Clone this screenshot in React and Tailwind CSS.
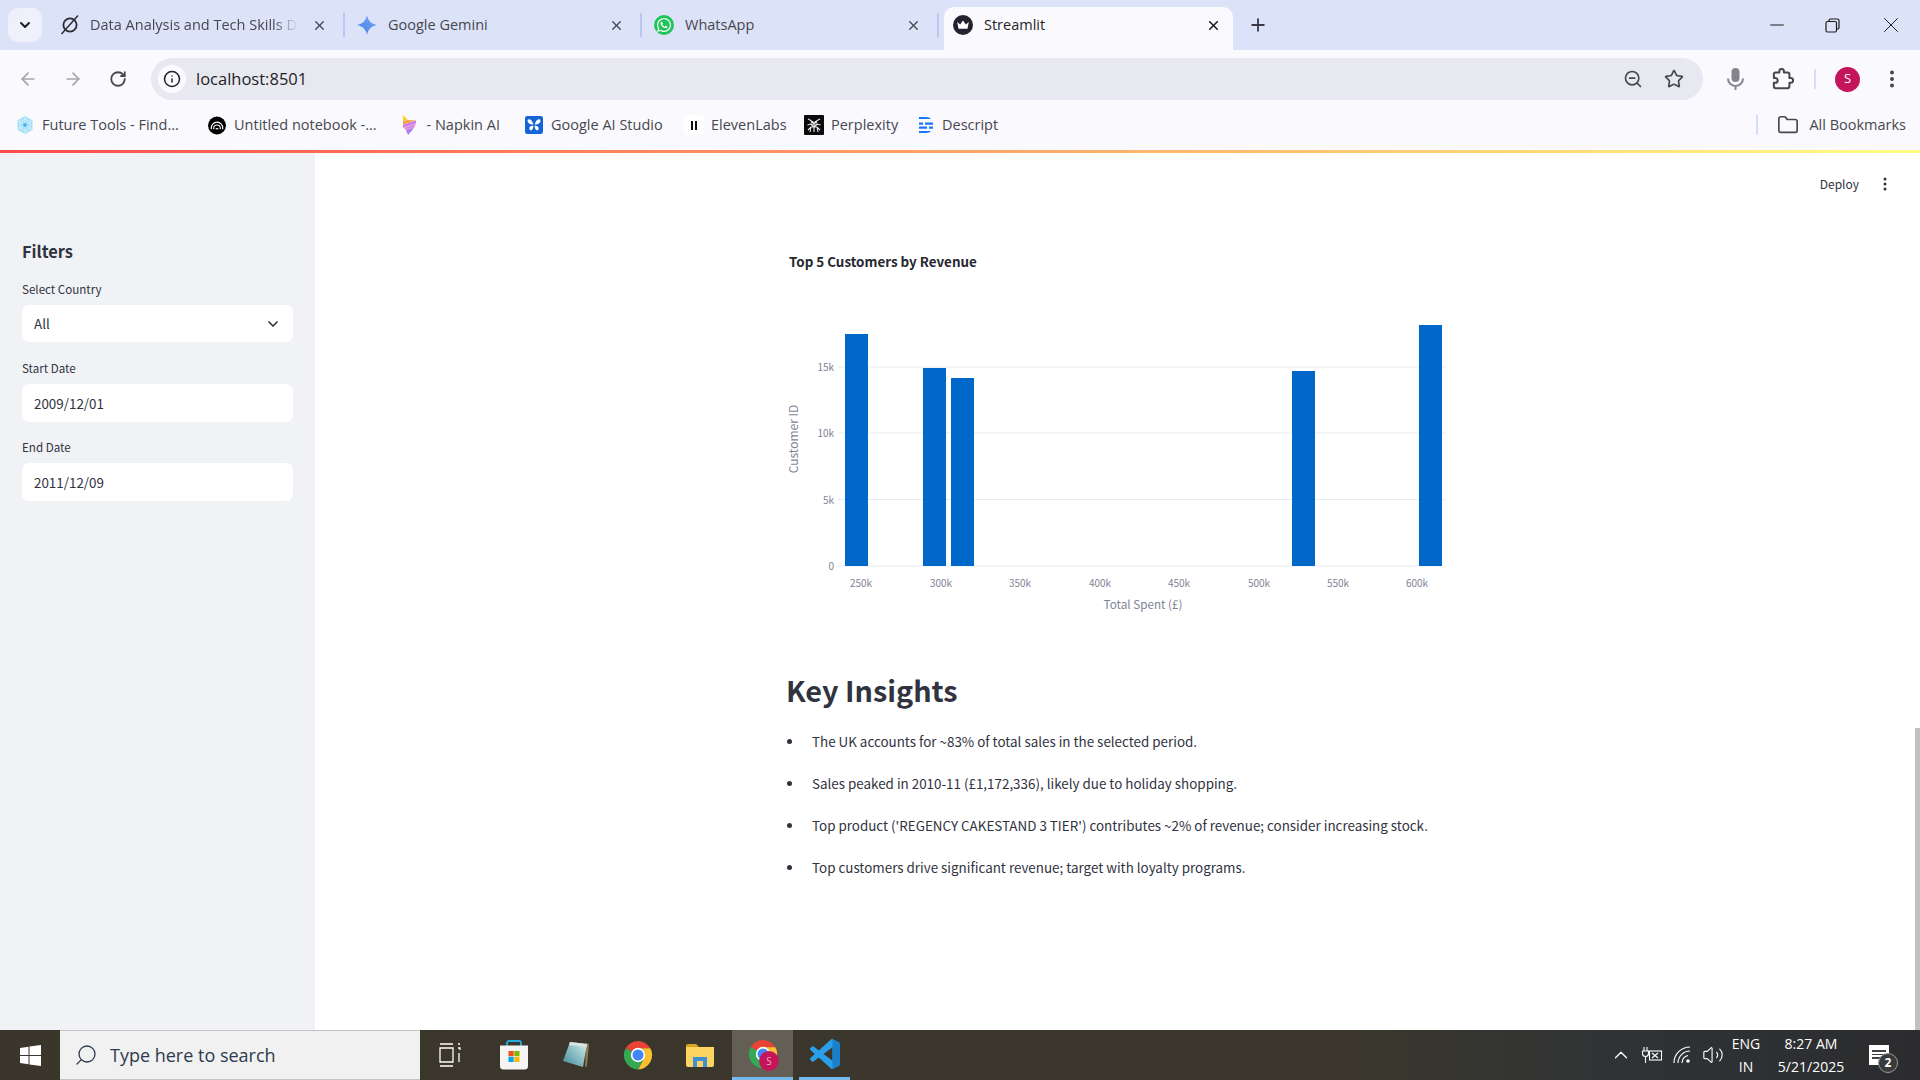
import React from 'react';
import { FaWhatsapp } from 'react-icons/fa';
import {
  ArrowLeft,
  ArrowRight,
  RotateCw,
  Info,
  ZoomOut,
  Star,
  Folder,
  ChevronDown,
  X,
  Plus,
  Minus,
  Search,
  ChevronUp,
  Volume2,
} from 'lucide-react';

const BARS = [
  { x: 845, top: 334 },
  { x: 923, top: 368 },
  { x: 951, top: 378 },
  { x: 1292, top: 371 },
  { x: 1419, top: 325 },
];
const X_TICKS = [
  ['250k', 861],
  ['300k', 941],
  ['350k', 1020],
  ['400k', 1100],
  ['450k', 1179],
  ['500k', 1259],
  ['550k', 1338],
  ['600k', 1417],
];
const Y_TICKS = [
  ['15k', 367],
  ['10k', 433],
  ['5k', 499.5],
  ['0', 566],
];
const INSIGHTS = [
  'The UK accounts for ~83% of total sales in the selected period.',
  'Sales peaked in 2010-11 (£1,172,336), likely due to holiday shopping.',
  "Top product ('REGENCY CAKESTAND 3 TIER') contributes ~2% of revenue; consider increasing stock.",
  'Top customers drive significant revenue; target with loyalty programs.',
];

const ChromeLogo = ({ size = 30 }) => (
  <svg width={size} height={size} viewBox="0 0 48 48">
    <path d="M4.200 13A23 23 0 0 1 43.800 13H24A11 11 0 0 0 14.500 18.500z" fill="#ea4335" />
    <path d="M43.800 13A23 23 0 0 1 24 47L33.500 29.500A11 11 0 0 0 24 13z" fill="#fbc02d" />
    <path d="M24 47A23 23 0 0 1 4.200 13L14.500 18.500 14.500 29.500 33.500 29.500z" fill="#34a853" />
    <circle cx="24" cy="24" r="11.500" fill="#fff" />
    <circle cx="24" cy="24" r="8.800" fill="#4285f4" />
  </svg>
);

const FavGrok = () => (
  <svg width="20" height="20" viewBox="0 0 20 20" fill="none" stroke="#2b2b30" strokeWidth="1.800">
    <circle cx="10" cy="10" r="6.600" />
    <path d="M1.500 19 18 .5" strokeWidth="1.400" />
  </svg>
);

const FavGemini = () => (
  <svg width="20" height="20" viewBox="0 0 20 20">
    <defs>
      <linearGradient id="gem" x1="0" y1="1" x2="1" y2="0">
        <stop offset="0" stopColor="#3f83e8" />
        <stop offset="1" stopColor="#7aa5f0" />
      </linearGradient>
    </defs>
    <path d="M10 0c.8 5.400 4.600 9.200 10 10-5.400.8-9.200 4.600-10 10-.8-5.400-4.600-9.200-10-10C5.400 9.200 9.200 5.400 10 0z" fill="url(#gem)" />
  </svg>
);

const FavWhatsApp = () => (
  <span className="flex h-5 w-5 items-center justify-center rounded-full bg-[#1fc45a] text-white">
    <FaWhatsapp size={16} />
  </span>
);

const FavStreamlit = () => (
  <svg width="20" height="20" viewBox="0 0 20 20">
    <circle cx="10" cy="10" r="10" fill="#23232f" />
    <path d="M4.200 7 7.200 9.400 10 5.400l2.800 4L15.800 7 14.500 13.800H5.500z" fill="#fff" />
  </svg>
);

const Tab = ({ icon, title, width, active, first }) => (
  <div
    className={
      active
        ? 'flex h-[43px] items-center self-end rounded-t-[10px] bg-[#faf9fe] pb-[7px] pl-[9px] text-[#1f1f24]'
        : 'flex h-[24px] items-center border-r-2 border-[#b9c8f3] pl-[12px] text-[#474750]'
    }
    style={{ width }}
  >
    <span className="flex w-[20px] shrink-0 justify-center">{icon}</span>
    <span
      className={
        first
          ? 'ml-[10px] w-[208px] overflow-hidden whitespace-nowrap text-[14.5px] [mask-image:linear-gradient(90deg,#000_88%,transparent)]'
          : 'ml-[11px] w-[208px] overflow-hidden whitespace-nowrap text-[14.5px]'
      }
    >
      {title}
    </span>
    <X size={15} strokeWidth={active ? 2.600 : 2.200} className={first || active ? 'ml-[14px]' : 'ml-[13px]'} />
  </div>
);

const TabStrip = () => (
  <div className="flex h-[50px] shrink-0 items-center bg-[#dce2f8]">
    <div className="ml-[8px] flex h-[34px] w-[34px] items-center justify-center rounded-[10px] bg-[#eef1fc] text-[#1f1f24]">
      <ChevronDown size={16} strokeWidth={3} />
    </div>
    <div className="ml-[6px] flex h-full items-center">
      <Tab icon={<FavGrok />} title="Data Analysis and Tech Skills Demo" width={297} first />
      <Tab icon={<FavGemini />} title="Google Gemini" width={297} />
      <Tab icon={<FavWhatsApp />} title="WhatsApp" width={297} />
      <div className="w-[5px]" />
      <Tab icon={<FavStreamlit />} title="Streamlit" width={289} active />
    </div>
    <Plus size={20} strokeWidth={2.200} className="ml-[15px] text-[#3a3a42]" />
    <div className="ml-auto flex items-center text-[#1c1c1c]">
      <Minus size={22} strokeWidth={1.100} className="mr-[37px]" />
      <svg width="15" height="15" viewBox="0 0 15 15" fill="none" stroke="#1c1c1c" strokeWidth="1.200" className="mr-[38px]">
        <rect x="1" y="3.500" width="10.500" height="10.500" rx="1.500" />
        <path d="M4 3.500V2.500A1.500 1.500 0 0 1 5.500 1H12.500A1.500 1.500 0 0 1 14 2.500V9.500A1.500 1.500 0 0 1 12.500 11H11.500" />
      </svg>
      <X size={26} strokeWidth={0.900} className="mr-[16px]" />
    </div>
  </div>
);

const AddressRow = () => (
  <div className="flex h-[50px] shrink-0 items-center pl-[18px] pt-[8px]">
    <ArrowLeft size={20} className="text-[#a4a4ab]" />
    <ArrowRight size={20} className="ml-[25px] text-[#a4a4ab]" />
    <RotateCw size={18} strokeWidth={2.400} className="ml-[26px] text-[#47474f]" />
    <div className="ml-[24px] flex h-[42px] w-[1552px] items-center rounded-full bg-[#e8e8f0] pl-[7px]">
      <span className="flex h-[28px] w-[28px] items-center justify-center rounded-full bg-[#faf9fe] text-[#1f1f24]">
        <Info size={18} strokeWidth={2} />
      </span>
      <span className="ml-[10px] text-[16.500px] leading-none text-[#1f1f24]">localhost:8501</span>
      <ZoomOut size={20} strokeWidth={2} className="ml-auto text-[#47474f]" />
      <Star size={20} strokeWidth={2} className="ml-[21px] mr-[19px] text-[#47474f]" />
    </div>
    {/* mic */}
    <svg width="21" height="24" viewBox="0 0 21 24" fill="none" className="ml-[22px]">
      <rect x="6.500" y="1" width="8" height="14" rx="4" fill="#84848c" />
      <path d="M3 11.500a7.500 7.500 0 0 0 15 0M10.500 19v4" stroke="#84848c" strokeWidth="2" />
    </svg>
    {/* extensions */}
    <svg width="22" height="22" viewBox="0 0 24 24" fill="none" stroke="#47474f" strokeWidth="2.200" strokeLinejoin="round" className="ml-[26px]">
      <path d="M20.500 11H19V7c0-1.100-.9-2-2-2h-4V3.500a2.500 2.500 0 0 0-5 0V5H4c-1.100 0-1.990.9-1.990 2v3.800H3.500c1.490 0 2.700 1.210 2.700 2.700s-1.210 2.700-2.700 2.700H2V20c0 1.100.9 2 2 2h13c1.100 0 2-.9 2-2v-4h1.500a2.500 2.500 0 0 0 0-5z" />
    </svg>
    <span className="ml-[20px] h-[20px] w-[2px] bg-[#d6def8]" />
    <span className="ml-[19px] flex h-[25px] w-[25px] items-center justify-center rounded-full bg-[#c4155a] text-[13px] text-white">
      S
    </span>
    <svg width="6" height="18" viewBox="0 0 6 18" fill="#47474f" className="ml-[29px]">
      <circle cx="3" cy="2.500" r="2" />
      <circle cx="3" cy="9" r="2" />
      <circle cx="3" cy="15.500" r="2" />
    </svg>
  </div>
);

const Bookmark = ({ icon, label, labelWidth, gap }) => (
  <div className="flex items-center" style={{ marginRight: gap }}>
    <span className="flex w-[18px] shrink-0 justify-center">{icon}</span>
    <span className="ml-[8px] whitespace-nowrap text-[14.500px] text-[#47474f]" style={{ width: labelWidth }}>
      {label}
    </span>
  </div>
);

const BookmarksRow = () => (
  <div className="flex h-[50px] shrink-0 items-center pl-[16px]">
    <Bookmark
      gap={31}
      labelWidth={135}
      label="Future Tools - Find..."
      icon={
        <svg width="18" height="20" viewBox="0 0 18 20" fill="none">
          <path d="M9 1l7.500 4.300v9.400L9 19l-7.500-4.300V5.300z" fill="#a6e0f8" />
          <path d="M9 4l5 2.900v6.200L9 16l-5-2.900V6.900zM9 1v18M1.500 5.300l15 9.400M16.500 5.300l-15 9.400" stroke="#d8f3fd" strokeWidth="0.800" />
          <circle cx="9" cy="10" r="2" fill="#4cb8ee" />
        </svg>
      }
    />
    <Bookmark
      gap={22.500}
      labelWidth={144}
      label="Untitled notebook -..."
      icon={
        <svg width="19" height="19" viewBox="0 0 19 19" fill="none">
          <circle cx="9.500" cy="9.500" r="9.500" fill="#000" />
          <path d="M3.500 13.500V12a6 6 0 0 1 12 0v1.500M6 13.500V12.500a3.500 3.500 0 0 1 7 0v1M8.200 13.500a1.400 1.400 0 0 1 2.600 0" stroke="#fff" strokeWidth="1.200" />
        </svg>
      }
    />
    <Bookmark
      gap={23.500}
      labelWidth={75}
      label="- Napkin AI"
      icon={
        <svg width="16" height="20" viewBox="0 0 16 20">
          <path d="M1 0l5 5-5 1z" fill="#f9d423" />
          <path d="M1 6l5-1 8 .5L1 10z" fill="#f7a24b" />
          <path d="M1 10l13-4.500v2.500L1 13z" fill="#c77df0" />
          <path d="M2 13l12-5-2 5-8 2z" fill="#e58ad6" />
          <path d="M4 15l8-2-6 7z" fill="#a47cf3" />
        </svg>
      }
    />
    <Bookmark
      gap={21}
      labelWidth={113}
      label="Google AI Studio"
      icon={
        <svg width="20" height="20" viewBox="0 0 20 20" fill="#fff">
          <rect width="20" height="20" rx="2.500" fill="#1565d8" />
          <path d="M9.300 9.500C8.200 5.500 6.300 3.500 4.500 3.500 3 3.500 2.500 5 3 6.500 3.700 8.500 6 9.800 9.300 9.500z" />
          <path d="M10.700 9.500C11.800 5.500 13.700 3.500 15.500 3.500 17 3.500 17.500 5 17 6.500 16.300 8.500 14 9.800 10.700 9.500z" />
          <path d="M9.300 10.800C6.500 10.500 4.700 12 4.800 14 4.900 15.800 6.500 16.500 7.600 15.500 8.800 14.500 9.300 12.800 9.300 10.800z" />
          <path d="M10.700 10.800C13.500 10.500 15.300 12 15.200 14 15.100 15.800 13.500 16.500 12.400 15.500 11.200 14.500 10.700 12.800 10.700 10.800z" />
        </svg>
      }
    />
    <Bookmark
      gap={21}
      labelWidth={73}
      label="ElevenLabs"
      icon={
        <span className="flex h-[20px] w-[20px] shrink-0 items-center justify-center gap-[2px] rounded-[4px] bg-white">
          <span className="h-[9px] w-[2px] bg-[#111]" />
          <span className="h-[9px] w-[2px] bg-[#111]" />
        </span>
      }
    />
    <Bookmark
      gap={21}
      labelWidth={64}
      label="Perplexity"
      icon={
        <svg width="20" height="20" viewBox="0 0 20 20" fill="none" className="shrink-0">
          <rect width="20" height="20" rx="1" fill="#0b0b0b" />
          <path d="M6 5l4 3 4-3M4 4l2 1M16 4l-2 1M10 8v9M6 9h8M3.500 10l3-1 3.500 3 3.500-3 3 1M4 15l3-3h6l3 3M7 12l-1 5M13 12l1 5" stroke="#e8e8e8" strokeWidth="1.100" />
          <circle cx="8" cy="7" r="1" fill="#fff" />
          <circle cx="12" cy="7" r="1" fill="#fff" />
        </svg>
      }
    />
    <Bookmark
      gap={0}
      labelWidth={56}
      label="Descript"
      icon={
        <svg width="15" height="18" viewBox="0 0 15 18" fill="#1677ff">
          <path d="M1 1h7c2.500 0 4 .7 5 2H1z" />
          <path d="M1 6.500h4v2.200H1zM7 6.500h8v2.200H7z" />
          <path d="M1 10.500h8v2.200H1zM11 10.500h4v2.200h-4z" />
          <path d="M1 15h12c-1 1.300-2.500 2-5 2H1z" />
        </svg>
      }
    />
    <span className="ml-auto h-[20px] w-[2px] bg-[#d6def8]" />
    <Folder size={22} strokeWidth={1.800} className="ml-[19px] text-[#47474f]" />
    <span className="ml-[10px] mr-[14px] text-[14.500px] text-[#47474f]">All Bookmarks</span>
  </div>
);

const Field = ({ label, value, caret, boxClass, className }) => (
  <div className={className}>
    <div className="h-[16px] text-[11.600px] leading-[16px] text-[#31333f]">{label}</div>
    <div className={'mt-[8px] flex items-center justify-between rounded-[7px] bg-white pl-[12px] pr-[12px] text-[13.400px] text-[#31333f] ' + boxClass}>
      <span>{value}</span>
      {caret && <ChevronDown size={16} strokeWidth={2.500} />}
    </div>
  </div>
);

const Sidebar = () => (
  <aside className="w-[315px] shrink-0 bg-[#f0f2f6] px-[22px] pt-[86px]">
    <h2 className="h-[24px] text-[16.400px] font-bold leading-[24px] text-[#31333f]">Filters</h2>
    <Field className="mt-[18px]" label="Select Country" value="All" caret boxClass="h-[37px]" />
    <Field className="mt-[18px]" label="Start Date" value="2009/12/01" boxClass="h-[38px]" />
    <Field className="mt-[17px]" label="End Date" value="2011/12/09" boxClass="h-[38px]" />
  </aside>
);

// plot drawn in page coordinates, shifted by the viewBox origin
const Chart = () => (
  <svg width="680" height="340" viewBox="776 280 680 340" className="-ml-[10px] block">
    {Y_TICKS.map(([label, y]) => (
      <g key={label}>
        <line x1="838" x2="1445" y1={y} y2={y} stroke="#e6eaf1" strokeWidth="1" />
        <text x="834" y={y + 4} textAnchor="end" fontSize="10" fill="#808495">
          {label}
        </text>
      </g>
    ))}
    {BARS.map((bar) => (
      <rect key={bar.x} x={bar.x} y={bar.top} width="23" height={566 - bar.top} fill="#0068c9" />
    ))}
    {X_TICKS.map(([label, x]) => (
      <text key={label} x={x} y="587" textAnchor="middle" fontSize="10" fill="#808495">
        {label}
      </text>
    ))}
    <text x="1143" y="609" textAnchor="middle" fontSize="11.700" fill="#808495">
      Total Spent (£)
    </text>
    <text x="798" y="439" textAnchor="middle" fontSize="12" fill="#808495" transform="rotate(-90 798 439)">
      Customer ID
    </text>
  </svg>
);

const Content = () => (
  <main className="relative flex-1 overflow-hidden bg-white text-[#31333f]">
    <div className="flex h-[62px] items-center justify-end pr-[33px]">
      <span className="text-[12px]">Deploy</span>
      <svg width="4" height="14" viewBox="0 0 4 14" fill="#31333f" className="ml-[24px]">
        <circle cx="2" cy="2" r="1.500" />
        <circle cx="2" cy="7" r="1.500" />
        <circle cx="2" cy="12" r="1.500" />
      </svg>
    </div>
    <div className="ml-[471px] w-[670px]">
      <h3 className="mt-[36px] h-[20px] pl-[3px] text-[13.400px] font-bold leading-[20px] text-[#262730]">
        Top 5 Customers by Revenue
      </h3>
      <div className="mt-[9px]">
        <Chart />
      </div>
      <h2 className="mt-[48px] h-[44px] text-[28.800px] font-semibold leading-[44px]">Key Insights</h2>
      <ul className="mt-[18px] flex flex-col gap-[20px]">
        {INSIGHTS.map((text) => (
          <li key={text} className="flex h-[22px] items-center text-[13.400px] leading-[22px]">
            <span className="ml-[1px] h-[5px] w-[5px] rounded-full bg-[#31333f]" />
            <span className="ml-[20px] whitespace-nowrap">{text}</span>
          </li>
        ))}
      </ul>
    </div>
    <div className="absolute bottom-0 right-0 top-[575px] w-[5px] bg-[#c1c1c1]" />
  </main>
);

const WinLogo = () => (
  <svg width="21" height="21" viewBox="0 0 21 21" fill="#fff">
    <path d="M0 3l8.500-1.200V10H0zM9.500 1.600 21 0v10H9.500zM0 11h8.500v8.200L0 18zM9.500 11H21v10l-11.500-1.600z" />
  </svg>
);

const TaskIcons = () => (
  <div className="flex h-full items-center">
    {/* task view */}
    <svg width="22" height="24" viewBox="0 0 22 24" fill="none" stroke="#fff" strokeWidth="1.300" className="ml-[19px]">
      <path d="M1 1h13M1 23h13M1 5h13v14H1zM19 1h2M19 5h2v2M20 10v9" />
    </svg>
    {/* store */}
    <svg width="30" height="30" viewBox="0 0 30 30" className="ml-[38px]">
      <path d="M8 7V3a2 2 0 0 1 2-2h10a2 2 0 0 1 2 2v4" fill="none" stroke="#29a8e0" strokeWidth="1.800" />
      <path d="M1 5.500h28V26a3.500 3.500 0 0 1-3.500 3.500H4.500A3.500 3.500 0 0 1 1 26z" fill="#f5f5f5" />
      <rect x="9.500" y="11" width="5.200" height="5.200" fill="#f25022" />
      <rect x="15.300" y="11" width="5.200" height="5.200" fill="#7fba00" />
      <rect x="9.500" y="16.800" width="5.200" height="5.200" fill="#00a4ef" />
      <rect x="15.300" y="16.800" width="5.200" height="5.200" fill="#ffb900" />
    </svg>
    {/* notepad */}
    <svg width="28" height="28" viewBox="0 0 28 28" className="ml-[33px]">
      <defs>
        <linearGradient id="pad" x1="0" y1="1" x2="1" y2="0">
          <stop offset="0" stopColor="#3e8a97" />
          <stop offset="1" stopColor="#d5edf0" />
        </linearGradient>
      </defs>
      <path d="M24 2 27 3 25 25 23 26z" fill="#8b7a4e" />
      <path d="M8 1 25 3 21 26 1 20z" fill="url(#pad)" />
      <path d="M8 1 25 3 24.500 6 7 4z" fill="#dbe3e4" />
    </svg>
    {/* chrome */}
    <span className="ml-[33px] flex">
      <ChromeLogo />
    </span>
    {/* explorer */}
    <svg width="28" height="23" viewBox="0 0 28 23" className="ml-[33px]">
      <path d="M0 2a2 2 0 0 1 2-2h8l3 3v5H0z" fill="#d9a520" />
      <path d="M0 3h28v18a2 2 0 0 1-2 2H2a2 2 0 0 1-2-2z" fill="#fcd462" />
      <path d="M7 13h14v10h-4v-6h-6v6H7z" fill="#3d8fd6" />
    </svg>
    {/* active chrome */}
    <div className="relative ml-[18px] flex h-full w-[61px] items-center justify-center border-b-[3px] border-[#76b9ed] bg-[#645f54]">
      <ChromeLogo />
      <span className="absolute left-[27px] top-[21px] flex h-[20px] w-[20px] items-center justify-center rounded-full bg-[#c4155a] text-[10px] text-[#f2a6c4]">
        S
      </span>
    </div>
    {/* vs code */}
    <div className="ml-[6px] flex h-full w-[51px] items-center justify-center border-b-[3px] border-[#76b9ed]">
      <svg width="30" height="30" viewBox="0 0 24 24">
        <path d="M23.150 2.587L18.210.21a1.494 1.494 0 0 0-1.705.29l-9.460 8.630-4.120-3.128a.999.999 0 0 0-1.276.057L.327 7.261A1 1 0 0 0 .326 8.740L3.899 12 .326 15.260a1 1 0 0 0 .001 1.479L1.650 17.940a.999.999 0 0 0 1.276.057l4.120-3.128 9.460 8.630a1.492 1.492 0 0 0 1.704.29l4.942-2.377A1.500 1.500 0 0 0 24 20.060V3.939a1.500 1.500 0 0 0-.85-1.352zm-5.146 14.861L10.826 12l7.178-5.448v10.896z" fill="#2aa0ea" />
        <path d="M18 .1l5.150 2.490A1.500 1.500 0 0 1 24 3.940v16.120a1.500 1.500 0 0 1-.85 1.350L18 23.900z" fill="#1a7fcb" />
      </svg>
    </div>
  </div>
);

const Tray = () => (
  <div className="ml-auto flex h-full items-center text-white">
    <ChevronUp size={22} strokeWidth={1.400} />
    <svg width="22" height="18" viewBox="0 0 22 18" fill="none" stroke="#fff" strokeWidth="1.100" className="ml-[9px]">
      <path d="M3 1v4M6 1v4M1.500 5h6v2.500a3 3 0 0 1-6 0zM4.500 10.500V17" />
      <rect x="8.500" y="5" width="12" height="9" />
      <path d="M11 7l6 5M17 7l-6 5" />
    </svg>
    <svg width="18" height="18" viewBox="0 0 18 18" fill="none" stroke="#fff" strokeWidth="1.100" className="ml-[10px]">
      <path d="M1 17A16 16 0 0 1 17 1M5 17A12 12 0 0 1 17 5M9 17a8 8 0 0 1 6-7.500" />
      <circle cx="15" cy="15" r="1.800" fill="#fff" stroke="none" />
    </svg>
    <Volume2 size={22} strokeWidth={1.200} className="ml-[11px]" />
    <div className="ml-[4px] flex w-[36px] flex-col items-center text-[14px] leading-[23px]">
      <span>ENG</span>
      <span>IN</span>
    </div>
    <div className="ml-[7px] flex w-[80px] flex-col items-center text-[14px] leading-[23px]">
      <span>8:27 AM</span>
      <span>5/21/2025</span>
    </div>
    <div className="relative ml-[18px] mr-[31px] h-[20px] w-[20px] bg-white">
      <span className="mx-[3px] mt-[5px] block h-[1.500px] bg-[#444]" />
      <span className="mx-[3px] mt-[2px] block h-[1.500px] bg-[#444]" />
      <span className="mx-[3px] mt-[2px] block h-[1.500px] bg-[#444]" />
      <span className="absolute left-[9px] top-[8px] flex h-[20px] w-[20px] items-center justify-center rounded-full border border-[#999] bg-[#3a3a3a] text-[12px] font-bold">
        2
      </span>
    </div>
  </div>
);

const Taskbar = () => (
  <div className="flex h-[50px] shrink-0 items-center bg-[linear-gradient(90deg,#3b362c,#3b372c_70%,#2f3336_85%,#2c2c2e)] font-['Open_Sans',sans-serif]">
    <div className="flex h-full w-[60px] items-center justify-center">
      <WinLogo />
    </div>
    <div className="flex h-full w-[360px] items-center border-y border-[#c4c4c4] bg-[#f1f1f1] pl-[14px] text-[#2e3a4e]">
      <Search size={24} strokeWidth={1.300} className="-scale-x-100" />
      <span className="ml-[12px] text-[18px]">Type here to search</span>
    </div>
    <TaskIcons />
    <Tray />
  </div>
);

export default function App() {
  return (
    <div className="flex h-screen w-[1920px] flex-col overflow-hidden bg-white">
      <div className="bg-[#faf9fe] font-['Open_Sans',sans-serif]">
        <TabStrip />
        <AddressRow />
        <BookmarksRow />
      </div>
      <div className="h-[3px] shrink-0 bg-[linear-gradient(90deg,#ff4b4b,#fffd80)]" />
      <div className="flex min-h-0 flex-1 font-['Noto_Sans_CJK_SC',sans-serif]">
        <Sidebar />
        <Content />
      </div>
      <Taskbar />
    </div>
  );
}
